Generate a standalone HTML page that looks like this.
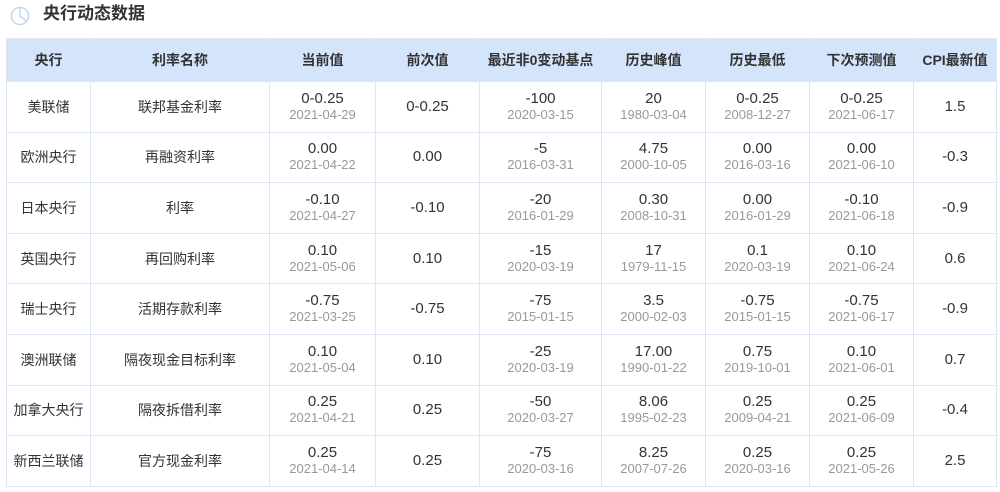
<!DOCTYPE html>
<html><head><meta charset="utf-8"><style>
body{margin:0;background:#fff;font-family:"Liberation Sans","Noto Sans CJK SC",sans-serif;width:1000px;height:492px;overflow:hidden;position:relative}
.title{position:absolute;left:43px;top:4px;font-size:17px;font-weight:bold;color:#333;line-height:20px}
.ic{position:absolute;left:10px;top:6px}
table{position:absolute;left:6px;top:38px;border-collapse:collapse;table-layout:fixed;width:990px}
td,th{border:1px solid #dce6f6;text-align:center;padding:0;color:#333;font-size:14px}
th{background:#d3e4fb;height:42px;font-weight:bold}
td{height:49.6px;line-height:16px;font-size:15px}
td:nth-child(1),td:nth-child(2){font-size:14px}
.d{font-size:13px;color:#999;display:block}
</style></head><body>
<svg class="ic" width="20" height="20" viewBox="0 0 20 20" fill="none" stroke="#c5d9f3" stroke-width="1.6"><circle cx="10" cy="10" r="8.5"/><path d="M10 1.5V10L16 15"/></svg>
<div class="title">央行动态数据</div>
<table>
<colgroup><col style="width:84px"><col style="width:179px"><col style="width:106px"><col style="width:104px"><col style="width:122px"><col style="width:104px"><col style="width:104px"><col style="width:104px"><col style="width:83px"></colgroup>
<tr><th>央行</th><th>利率名称</th><th>当前值</th><th>前次值</th><th>最近非0变动基点</th><th>历史峰值</th><th>历史最低</th><th>下次预测值</th><th>CPI最新值</th></tr>
<tr><td>美联储</td><td>联邦基金利率</td><td>0-0.25<span class="d">2021-04-29</span></td><td>0-0.25</td><td>-100<span class="d">2020-03-15</span></td><td>20<span class="d">1980-03-04</span></td><td>0-0.25<span class="d">2008-12-27</span></td><td>0-0.25<span class="d">2021-06-17</span></td><td>1.5</td></tr>
<tr><td>欧洲央行</td><td>再融资利率</td><td>0.00<span class="d">2021-04-22</span></td><td>0.00</td><td>-5<span class="d">2016-03-31</span></td><td>4.75<span class="d">2000-10-05</span></td><td>0.00<span class="d">2016-03-16</span></td><td>0.00<span class="d">2021-06-10</span></td><td>-0.3</td></tr>
<tr><td>日本央行</td><td>利率</td><td>-0.10<span class="d">2021-04-27</span></td><td>-0.10</td><td>-20<span class="d">2016-01-29</span></td><td>0.30<span class="d">2008-10-31</span></td><td>0.00<span class="d">2016-01-29</span></td><td>-0.10<span class="d">2021-06-18</span></td><td>-0.9</td></tr>
<tr><td>英国央行</td><td>再回购利率</td><td>0.10<span class="d">2021-05-06</span></td><td>0.10</td><td>-15<span class="d">2020-03-19</span></td><td>17<span class="d">1979-11-15</span></td><td>0.1<span class="d">2020-03-19</span></td><td>0.10<span class="d">2021-06-24</span></td><td>0.6</td></tr>
<tr><td>瑞士央行</td><td>活期存款利率</td><td>-0.75<span class="d">2021-03-25</span></td><td>-0.75</td><td>-75<span class="d">2015-01-15</span></td><td>3.5<span class="d">2000-02-03</span></td><td>-0.75<span class="d">2015-01-15</span></td><td>-0.75<span class="d">2021-06-17</span></td><td>-0.9</td></tr>
<tr><td>澳洲联储</td><td>隔夜现金目标利率</td><td>0.10<span class="d">2021-05-04</span></td><td>0.10</td><td>-25<span class="d">2020-03-19</span></td><td>17.00<span class="d">1990-01-22</span></td><td>0.75<span class="d">2019-10-01</span></td><td>0.10<span class="d">2021-06-01</span></td><td>0.7</td></tr>
<tr><td>加拿大央行</td><td>隔夜拆借利率</td><td>0.25<span class="d">2021-04-21</span></td><td>0.25</td><td>-50<span class="d">2020-03-27</span></td><td>8.06<span class="d">1995-02-23</span></td><td>0.25<span class="d">2009-04-21</span></td><td>0.25<span class="d">2021-06-09</span></td><td>-0.4</td></tr>
<tr><td>新西兰联储</td><td>官方现金利率</td><td>0.25<span class="d">2021-04-14</span></td><td>0.25</td><td>-75<span class="d">2020-03-16</span></td><td>8.25<span class="d">2007-07-26</span></td><td>0.25<span class="d">2020-03-16</span></td><td>0.25<span class="d">2021-05-26</span></td><td>2.5</td></tr>
</table>
</body></html>
